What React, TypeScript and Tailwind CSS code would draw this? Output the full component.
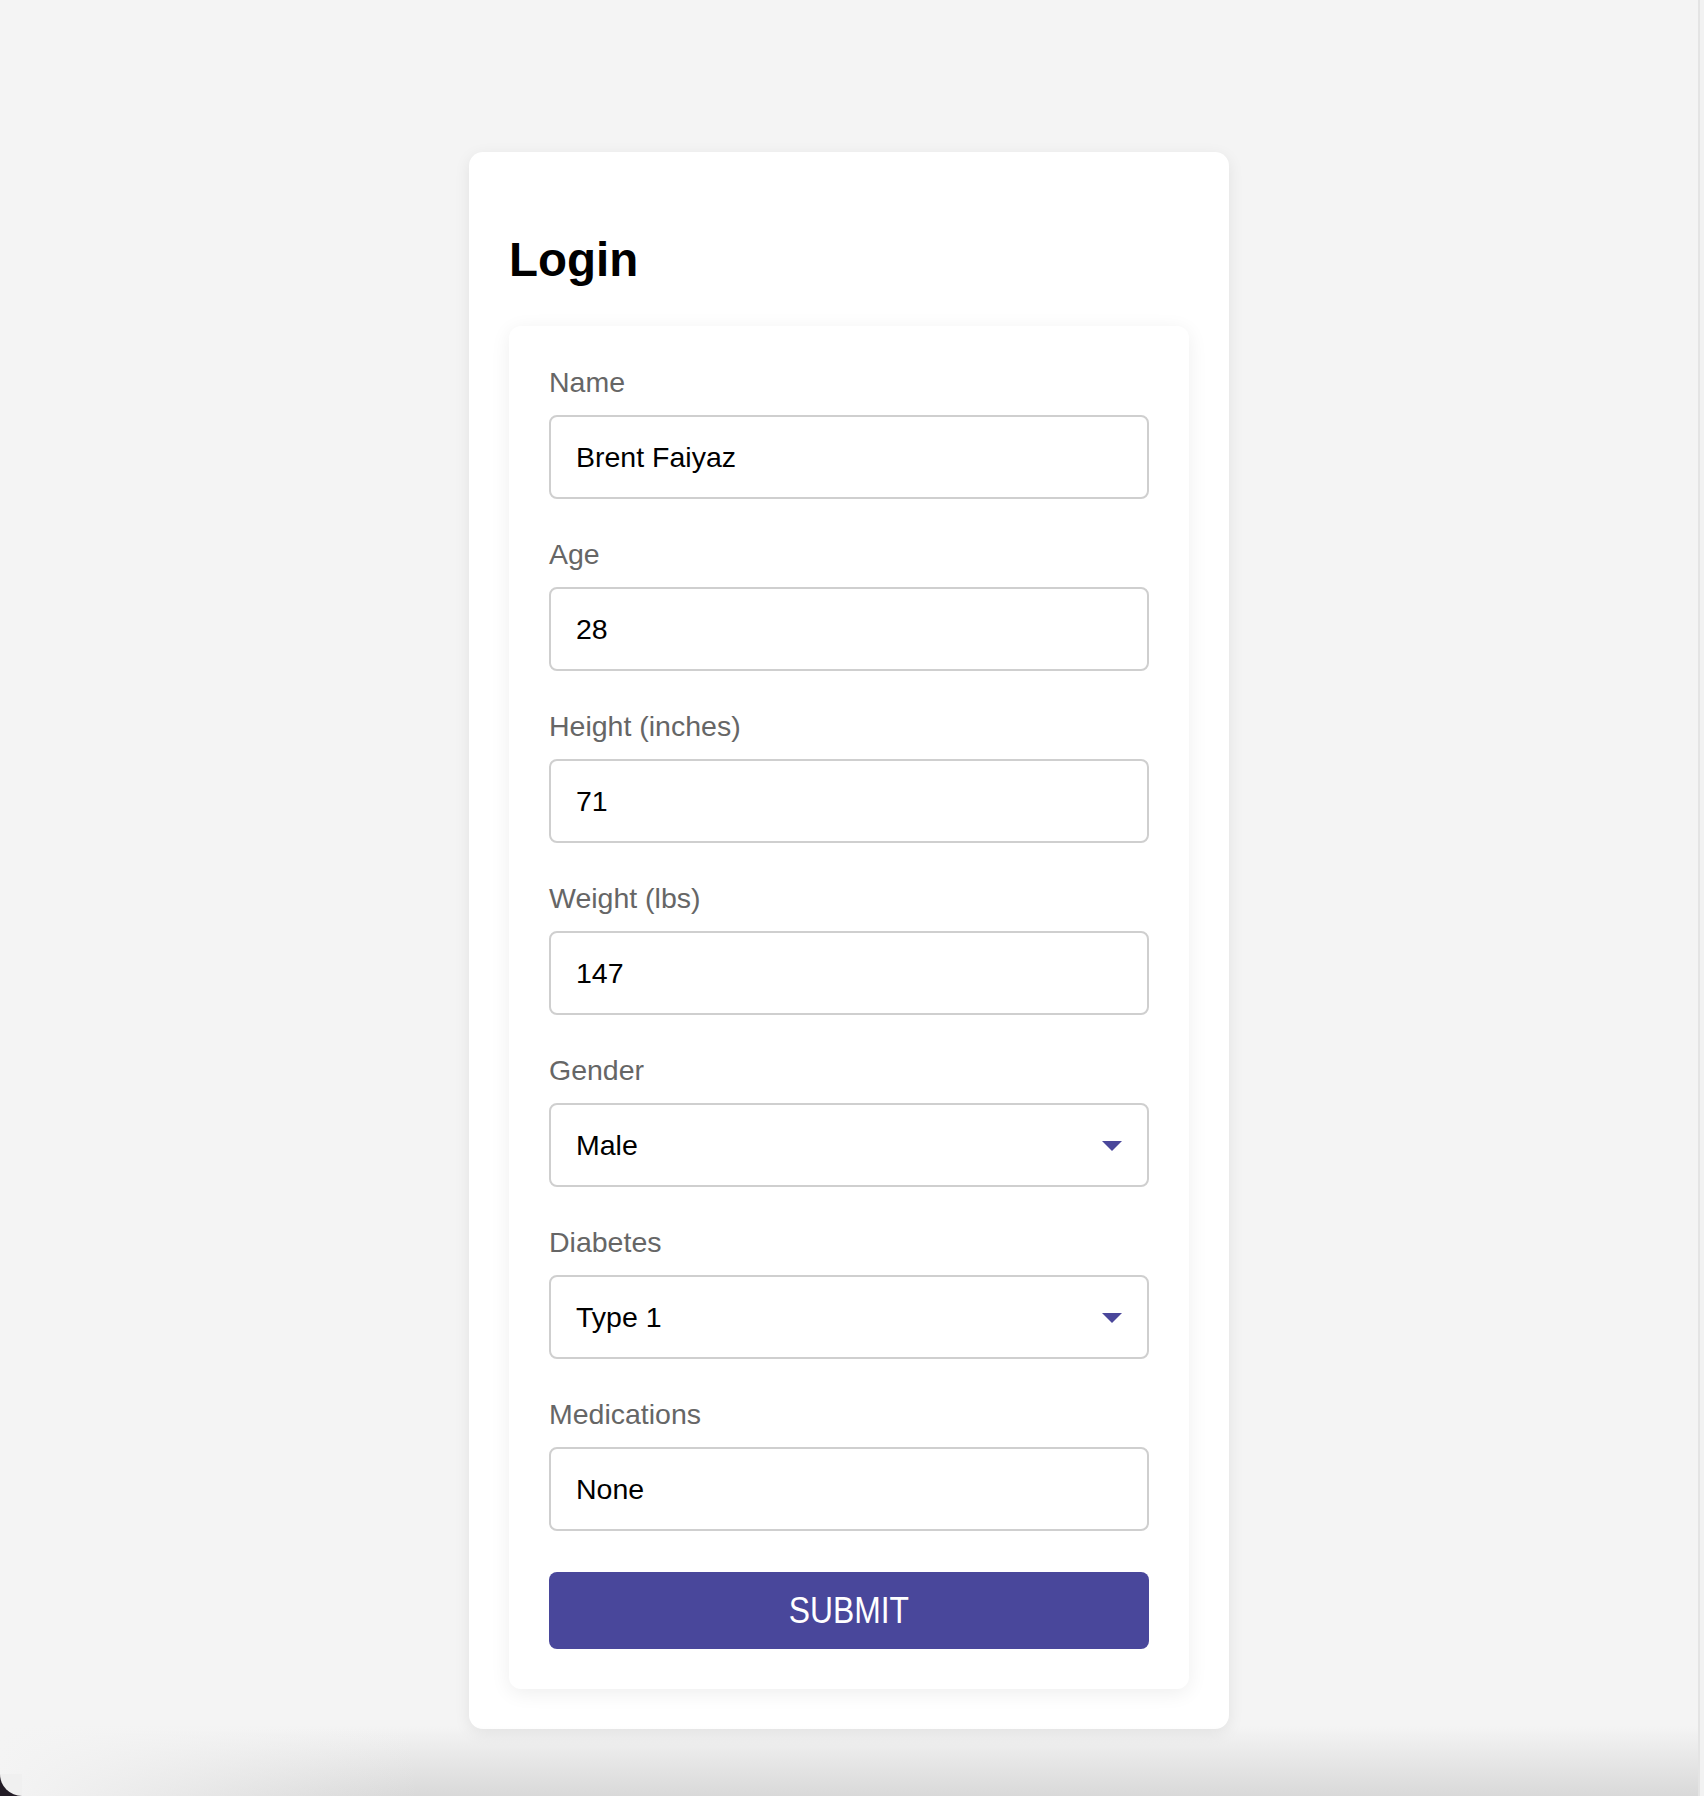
import React, { useState } from 'react';

const font = { fontFamily: '"Liberation Sans", Arial, Helvetica, sans-serif' };

const Caret: React.FC = () => (
    <svg width="20" height="10" viewBox="0 0 20 10" className="shrink-0">
        <path d="M0 0 L20 0 L10 10 Z" fill="#4a479b" />
    </svg>
);

const Field: React.FC<{ label: string; value: string; onChange: (v: string) => void; first?: boolean }> = ({ label, value, onChange, first }) => (
    <div className={first ? '' : 'mt-[39px]'}>
        <label className="block text-[28.5px] leading-[33px] text-[#666666] mb-4">{label}</label>
        <input
            value={value}
            onChange={(e) => onChange(e.target.value)}
            className="block w-full h-[84px] rounded-lg border-2 border-[#cfcfcf] bg-white px-[25px] text-[28.5px] text-black outline-none"
            style={font}
        />
    </div>
);

const SelectField: React.FC<{ label: string; value: string; options: string[]; onChange: (v: string) => void }> = ({ label, value, options, onChange }) => (
    <div className="mt-[39px]">
        <label className="block text-[28.5px] leading-[33px] text-[#666666] mb-4">{label}</label>
        <div className="relative">
            <select
                value={value}
                onChange={(e) => onChange(e.target.value)}
                className="block w-full h-[84px] appearance-none rounded-lg border-2 border-[#cfcfcf] bg-white px-[25px] text-[28.5px] text-black outline-none"
                style={font}
            >
                {options.map(o => <option key={o} value={o}>{o}</option>)}
            </select>
            <div className="pointer-events-none absolute right-[27px] top-[38px] flex">
                <Caret />
            </div>
        </div>
    </div>
);

const App: React.FC = () => {
    const [name, setName] = useState('Brent Faiyaz');
    const [age, setAge] = useState('28');
    const [height, setHeight] = useState('71');
    const [weight, setWeight] = useState('147');
    const [gender, setGender] = useState('Male');
    const [diabetes, setDiabetes] = useState('Type 1');
    const [meds, setMeds] = useState('None');

    return (
        <div className="relative flex h-[1796px] w-full overflow-hidden bg-[#f4f4f4]" style={font}>
            <div className="flex flex-1 justify-center">
                <div className="mt-[152px] h-fit w-[760px] rounded-[14px] bg-white px-10 pb-10 pt-10 shadow-[0_4px_16px_rgba(0,0,0,0.08)]">
                    <h1 className="mt-[41px] mb-[39px] text-[47.5px] font-bold leading-[54px] text-black">Login</h1>
                    <div className="rounded-[12px] bg-white p-10 shadow-[0_4px_20px_rgba(0,0,0,0.07)]">
                        <Field first label="Name" value={name} onChange={setName} />
                        <Field label="Age" value={age} onChange={setAge} />
                        <Field label="Height (inches)" value={height} onChange={setHeight} />
                        <Field label="Weight (lbs)" value={weight} onChange={setWeight} />
                        <SelectField label="Gender" value={gender} options={['Male', 'Female', 'Other']} onChange={setGender} />
                        <SelectField label="Diabetes" value={diabetes} options={['Type 1', 'Type 2', 'None']} onChange={setDiabetes} />
                        <Field label="Medications" value={meds} onChange={setMeds} />
                        <button className="mt-[41px] flex h-[77px] w-full items-center justify-center rounded-lg bg-[#49479b] text-white">
                            <span className="inline-block scale-x-[0.86] text-[37px] leading-none">SUBMIT</span>
                        </button>
                    </div>
                </div>
            </div>
            <div className="w-[6px] shrink-0 border-l-2 border-[#e4e4e4] bg-[#f2f2f2]" />
            <div className="pointer-events-none absolute bottom-0 left-0 right-[6px] h-[70px] bg-gradient-to-b from-transparent to-[#d9d9d9]" />
            <div className="pointer-events-none absolute bottom-0 left-0 h-[70px] w-[420px] bg-gradient-to-r from-[#f4f4f4] to-transparent" />
            <div className="pointer-events-none absolute bottom-0 left-0 h-[22px] w-[22px] bg-[#231c26]">
                <div className="h-full w-full rounded-bl-[22px] bg-[#f0f0f0]" />
            </div>
        </div>
    );
};

export default App;
